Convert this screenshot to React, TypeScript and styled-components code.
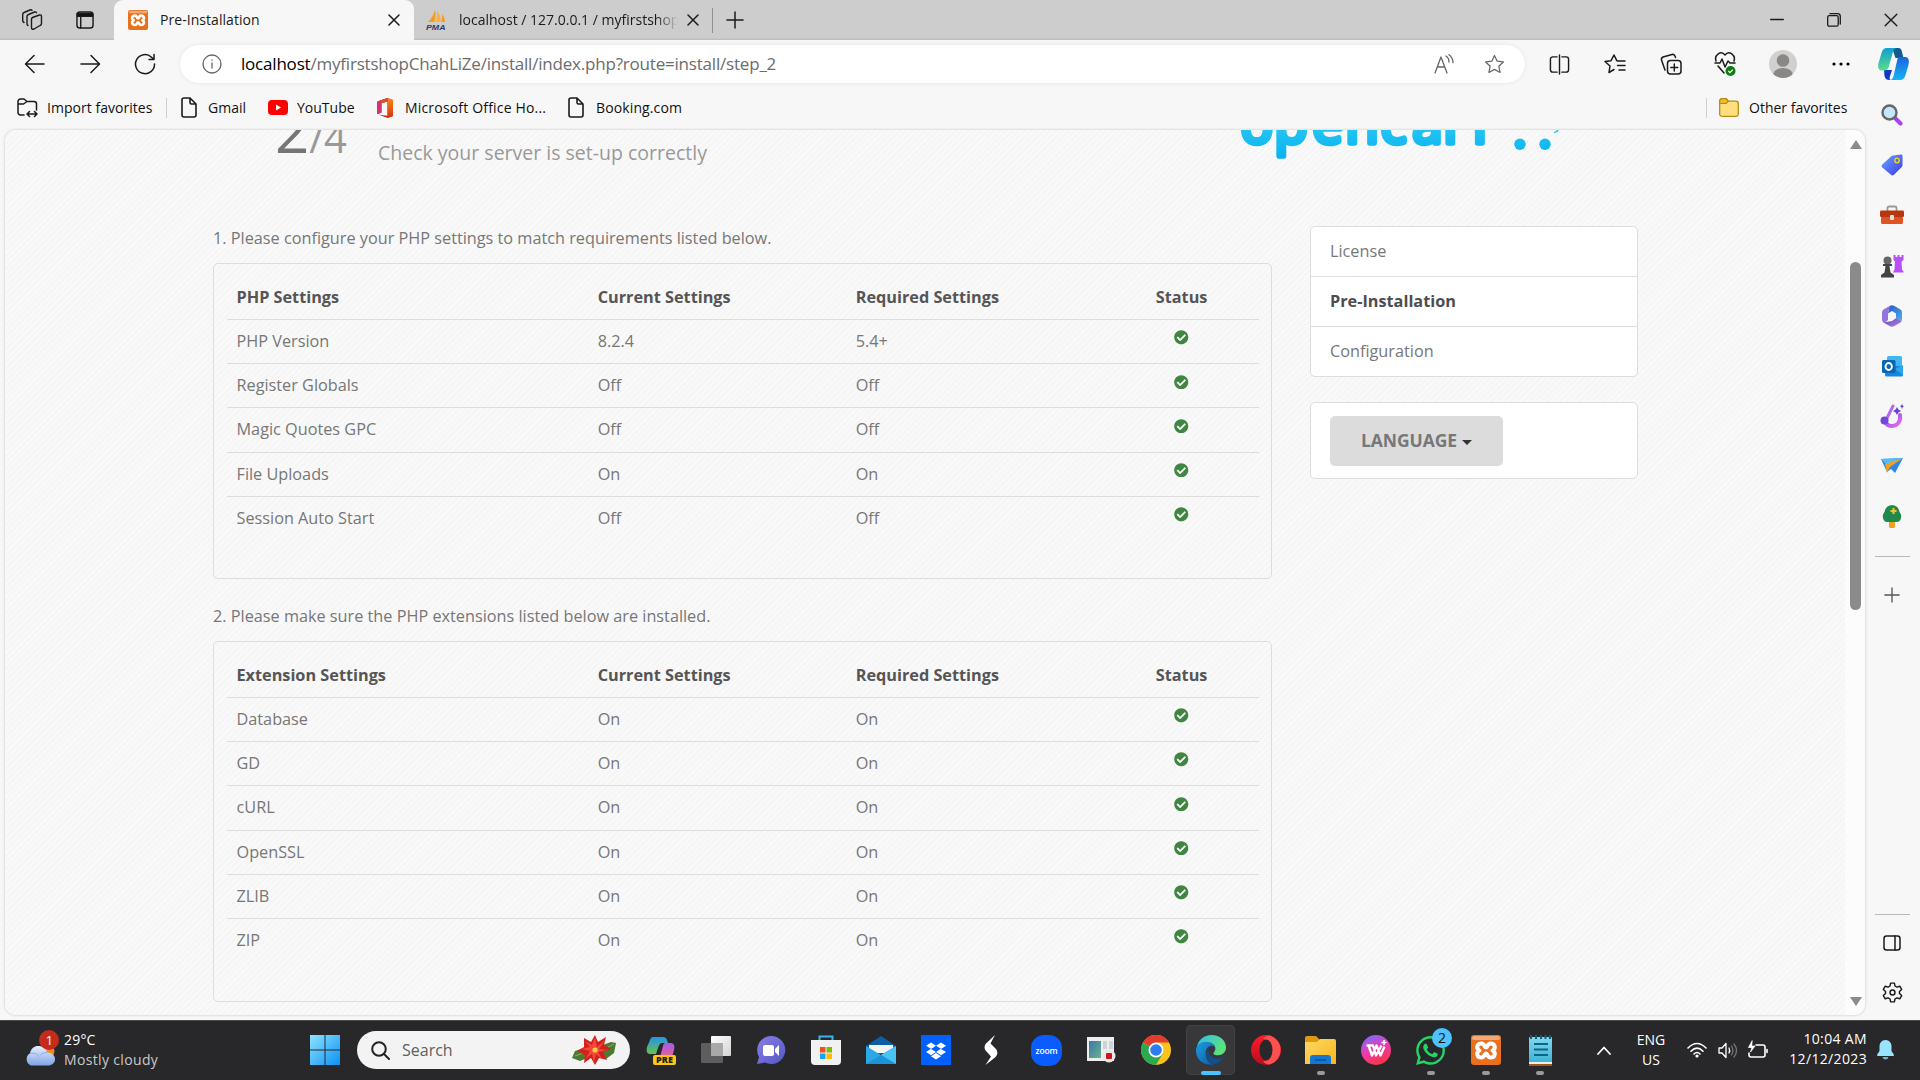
import React from "react";
import styled, { createGlobalStyle, css } from "styled-components";
import { FaCheckCircle, FaWhatsapp, FaDropbox } from "react-icons/fa";

const UI = `"Open Sans", "Noto Sans", "Liberation Sans", sans-serif`;

const GlobalStyle = createGlobalStyle`
  * { box-sizing: border-box; }
  body { margin: 0; background: #f7f7f7; font-family: ${UI}; overflow: hidden; }
  svg { display: block; flex: none; }
  p { margin: 0; }
`;

const Desktop = styled.div`
  width: 1920px;
  height: 1080px;
  display: flex;
  flex-direction: column;
  overflow: hidden;
  color: #111;
`;

/* ---------- tab strip ---------- */
const TabStrip = styled.header`
  height: 40px;
  flex: none;
  display: flex;
  background: #cdcdcd;
  box-shadow: inset 0 -2px 2px -1px #b9b9b9;
`;
const Slot = styled.div<{ $w: number }>`
  width: ${(p) => p.$w}px;
  flex: none;
  display: flex;
  align-items: center;
  justify-content: center;
`;
const ActiveTab = styled.div`
  width: 300px;
  margin-left: 8px;
  background: #f7f7f7;
  border-radius: 9px 9px 0 0;
  display: flex;
  align-items: center;
  padding: 0 14px 0 14px;
  z-index: 1;
`;
const IdleTab = styled.div`
  width: 298px;
  display: flex;
  align-items: center;
  padding: 0 13px 0 12px;
`;
const TabTitle = styled.span<{ $left: number; $fade?: boolean; $ls: number }>`
  flex: 1;
  margin-left: ${(p) => p.$left}px;
  font-size: 14px;
  letter-spacing: ${(p) => p.$ls}px;
  line-height: 20px;
  white-space: nowrap;
  overflow: hidden;
  color: #1b1b1b;
  ${(p) =>
    p.$fade &&
    css`
      margin-right: 9px;
      -webkit-mask-image: linear-gradient(90deg, #000 90%, transparent 100%);
    `}
`;
const VRule = styled.div<{ $h: number; $c?: string; $mr?: number }>`
  width: 1px;
  height: ${(p) => p.$h}px;
  margin-right: ${(p) => p.$mr || 0}px;
  align-self: center;
  background: ${(p) => p.$c || "#cfcfcf"};
`;
const Spacer = styled.div`
  flex: 1;
`;

/* ---------- toolbar ---------- */
const Toolbar = styled.div`
  height: 48px;
  flex: none;
  display: flex;
  align-items: center;
  padding-left: 7px;
`;
const AddressBar = styled.div`
  width: 1345px;
  height: 38px;
  margin: 0 7px 0 8px;
  border-radius: 19px;
  background: #fff;
  box-shadow: 0 0 4px rgba(0, 0, 0, 0.08);
  display: flex;
  align-items: center;
  padding: 0 6px 0 7px;
`;
const Url = styled.span`
  margin-left: 4px;
  font-size: 17px;
  letter-spacing: -0.2px;
  line-height: 24px;
  color: #6c6c6c;
  white-space: nowrap;
  b {
    font-weight: 400;
    color: #000;
  }
`;

/* ---------- favorites bar ---------- */
const FavoritesBar = styled.nav`
  height: 42px;
  flex: none;
  display: flex;
  align-items: center;
  padding: 0 0 3px 17px;
`;
const Favorite = styled.div<{ $w: number; $gap: number; $ls?: number }>`
  width: ${(p) => p.$w}px;
  flex: none;
  display: flex;
  align-items: center;
  gap: ${(p) => p.$gap}px;
  font-size: 14px;
  letter-spacing: ${(p) => p.$ls || 0}px;
  line-height: 20px;
  white-space: nowrap;
`;

/* ---------- page ---------- */
const Middle = styled.div`
  flex: 1;
  min-height: 0;
  display: flex;
  padding-left: 5px;
`;
const Viewport = styled.main`
  width: 1860px;
  height: 885px;
  flex: none;
  display: flex;
  overflow: hidden;
  border-radius: 11px;
  box-shadow: 0 0 3px rgba(0, 0, 0, 0.22);
`;
const Page = styled.div`
  flex: 1;
  overflow: hidden;
  color: #777;
  background: repeating-linear-gradient(
    135deg,
    #f6f6f6 0,
    #f6f6f6 2.4px,
    #fbfbfb 3.2px,
    #fbfbfb 3.7px,
    #f6f6f6 4.42px
  );
`;
const ScrollTrack = styled.div`
  width: 20px;
  background: #fcfcfc;
  display: flex;
  flex-direction: column;
  align-items: center;
  padding: 10px 0 9px 1px;
`;
const ScrollThumb = styled.div`
  width: 11px;
  height: 348px;
  margin: 113px 0 auto;
  border-radius: 6px;
  background: #8b8b8b;
`;
const ScrollArrow = styled.span<{ $down?: boolean }>`
  border: 6px solid transparent;
  ${(p) =>
    p.$down
      ? "border-top: 9px solid #8b8b8b; border-bottom: 0;"
      : "border-bottom: 9px solid #8b8b8b; border-top: 0;"}
`;
const PageHeader = styled.div`
  height: 96px;
  display: flex;
  padding-left: 270px;
`;
const Step = styled.div`
  width: 103px;
  margin-top: -30px;
  font-size: 60px;
  line-height: 60px;
  color: #757575;
  white-space: nowrap;
  small {
    font-size: 40px;
    color: #999;
  }
`;
const Lead = styled.p`
  margin-top: 9px;
  width: 852px;
  font-size: 19.5px;
  line-height: 28px;
  color: #999;
`;
const Logo = styled.div`
  margin-top: -20px;
`;
const Columns = styled.div`
  display: flex;
  gap: 38px;
  padding-left: 208px;
`;
const MainColumn = styled.div`
  width: 1059px;
  font-size: 16.25px;
`;
const Intro = styled.p<{ $top?: number }>`
  height: 24px;
  line-height: 24px;
  margin: ${(p) => p.$top || 0}px 0 13px;
`;
const Panel = styled.section`
  border: 1px solid #ddd;
  border-radius: 5px;
  padding: 11px 12px 38.5px 13px;
`;
const Row = styled.div<{ $head?: boolean }>`
  display: grid;
  grid-template-columns: 35% 25% 25% 15%;
  height: ${(p) => (p.$head ? 44 : 44.2)}px;
  align-items: center;
  ${(p) => p.$head && "font-weight: 700; color: #555;"}
  & + & {
    border-top: 1px solid #ddd;
    padding-bottom: 1px;
  }
`;
const Cell = styled.div<{ $status?: boolean }>`
  padding: 0 9.5px;
  line-height: 24px;
  ${(p) => p.$status && "display: flex; justify-content: center;"}
`;
const Passed = styled(FaCheckCircle)`
  color: #418542;
  font-size: 14.5px;
  margin-bottom: 7px;
`;
const SideColumn = styled.aside`
  width: 328px;
  font-size: 16.25px;
`;
const Card = styled.div`
  background: #fff;
  border: 1px solid #ddd;
  border-radius: 5px;
  margin-bottom: 25px;
`;
const StepLink = styled.div<{ $active?: boolean }>`
  height: 49px;
  padding: 0 19px 1px;
  display: flex;
  align-items: center;
  ${(p) => p.$active && "font-weight: 700; color: #4d4d4d;"}
  & + & {
    height: 50px;
    border-top: 1px solid #ddd;
  }
`;
const LanguageCard = styled(Card)`
  height: 77px;
  padding: 13px 19px;
`;
const LanguageButton = styled.button`
  width: 173px;
  height: 50px;
  border: 0;
  border-radius: 5px;
  background: #dcdcdc;
  color: #777;
  font: 700 17.5px ${UI};
  letter-spacing: -0.1px;
  padding: 0 0 2px;
  display: flex;
  align-items: center;
  justify-content: center;
  gap: 5px;
`;
const Caret = styled.span`
  border: 5px solid transparent;
  border-top-color: #333;
  border-bottom: 0;
  margin-top: 4px;
`;

/* ---------- edge sidebar ---------- */
const SideBar = styled.aside`
  flex: 1;
  display: flex;
  flex-direction: column;
  align-items: center;
  margin-top: -40px;
  padding-right: 1px;
  z-index: 1;
`;
const SideItem = styled.div<{ $h?: number }>`
  height: ${(p) => p.$h || 50.2}px;
  flex: none;
  display: flex;
  align-items: center;
  justify-content: center;
`;
const HRule = styled.div`
  width: 35px;
  height: 1px;
  background: #b9b9b9;
  flex: none;
`;

/* ---------- taskbar ---------- */
const Taskbar = styled.footer`
  height: 60px;
  flex: none;
  display: flex;
  align-items: center;
  padding-bottom: 1px;
  background: #28282b;
  border-top: 1px solid #4a4a4c;
  color: #fff;
  z-index: 2;
`;
const Weather = styled.div`
  width: 297px;
  padding: 0 0 1px 24px;
  display: flex;
  align-items: center;
  font-size: 14px;
  line-height: 20px;
  letter-spacing: 0.2px;
  gap: 4px;
  span {
    color: #c9c9c9;
    letter-spacing: 0.35px;
  }
`;
const StartSlot = styled(Slot)`
  margin-right: 5px;
`;
const SearchBox = styled.div`
  width: 273px;
  height: 38px;
  margin-right: 4px;
  border-radius: 19px;
  background: #f3f3f3;
  display: flex;
  align-items: center;
  padding: 0 14px;
  color: #5f5f5f;
  font-size: 16px;
  gap: 12px;
  letter-spacing: 0;
`;
const Program = styled.div<{ $active?: boolean; $running?: boolean }>`
  width: 49px;
  height: 50px;
  margin: 0 2.98px;
  flex: none;
  border-radius: 5px;
  display: flex;
  align-items: center;
  justify-content: center;
  position: relative;
  ${(p) => p.$active && "background: #38383b; box-shadow: inset 0 0 0 1px #434346;"}
  &::after {
    content: "";
    position: absolute;
    bottom: 0;
    height: 4px;
    border-radius: 2px;
    ${(p) =>
      p.$active
        ? "width: 20px; background: #4cc2ff;"
        : p.$running
          ? "width: 8px; background: #9a9a9a;"
          : ""}
  }
`;
const Count = styled.span`
  position: absolute;
  left: 26px;
  top: 3px;
  width: 20px;
  height: 20px;
  border-radius: 50%;
  background: #4cc2ff;
  color: #111;
  font-size: 14px;
  line-height: 20px;
  text-align: center;
`;
const Lang = styled.div`
  width: 58px;
  text-align: center;
  font-size: 14px;
  line-height: 20px;
`;
const Clock = styled.div`
  width: 93px;
  margin: -2px 10px 0 0;
  text-align: right;
  font-size: 14px;
  line-height: 20px;
  letter-spacing: 0.35px;
  white-space: nowrap;
`;

/* ---------- drawings ---------- */
type LineProps = { w?: number; h?: number; vb?: string; c?: string; sw?: number; children: React.ReactNode };
const Line = ({ w = 22, h = w, vb = "0 0 22 22", c = "#1b1b1b", sw = 1.5, children }: LineProps) => (
  <svg width={w} height={h} viewBox={vb} fill="none" stroke={c} strokeWidth={sw} strokeLinecap="round" strokeLinejoin="round">
    {children}
  </svg>
);
const CloseIcon = ({ s = 11, w = 1.5 }: { s?: number; w?: number }) => (
  <Line w={s} vb="0 0 12 12" sw={w}><path d="M1 1l10 10M11 1L1 11" /></Line>
);
const PlusIcon = ({ s = 18, c = "#1b1b1b" }: { s?: number; c?: string }) => (
  <Line w={s} vb="0 0 18 18" c={c}><path d="M9 1v16M1 9h16" /></Line>
);
const FileIcon = () => (
  <Line w={16} h={21} vb="0 0 16 21" sw={1.6}>
    <path d="M3 1h6l6 6v11a2 2 0 0 1-2 2H3a2 2 0 0 1-2-2V3a2 2 0 0 1 2-2zM9 1v4.500a1.500 1.500 0 0 0 1.500 1.500H15" />
  </Line>
);
const STAR = "M11 1.500l2.800 6 6.500.8-4.800 4.500 1.300 6.500L11 16.100l-5.800 3.200 1.300-6.500L1.700 8.300l6.500-.8z";
const Xampp = ({ s }: { s: number }) => (
  <svg width={s} height={s} viewBox="0 0 30 30">
    <rect width="30" height="30" rx="3" fill="#e9701c" />
    <rect x="1" y="1" width="28" height="4" rx="2" fill="#f3a878" />
    <path
      d="M10.500 8.500C5.500 8.500 5 14 8.500 15.500 5 17 5.500 22.500 10.500 22.500c3.500 0 2.500-4 4.500-4s1 4 4.500 4c5 0 5.500-5.500 2-7 3.500-1.500 3-7-2-7-3.500 0-2.500 4-4.500 4s-1-4-4.500-4z"
      fill="none"
      stroke="#fff"
      strokeWidth="4"
      strokeLinejoin="round"
    />
  </svg>
);
const Gradient = ({ id, a, b, x2 = "1", y2 = "1" }: { id: string; a: string; b: string; x2?: string; y2?: string }) => (
  <linearGradient id={id} x1="0" y1="0" x2={x2} y2={y2}>
    <stop stopColor={a} />
    <stop offset="1" stopColor={b} />
  </linearGradient>
);
const PmaIcon = () => (
  <svg width="20" height="20" viewBox="0 0 20 20">
    <path d="M9 0c1 4 1 8-1 12H2C6 8 8 4 9 0z" fill="#f59b1e" />
    <path d="M11 1c3 3 4 7 3.500 11H9C11 8 11.500 5 11 1z" fill="#fbb040" />
    <path d="M16 4c2 3 3 5 3 8h-4c1-2 1.300-5 1-8z" fill="#f59b1e" />
    <text x="0" y="19.700" fontSize="8" fontWeight="700" fontStyle="italic" fill="#33376b" textLength="19.500" lengthAdjust="spacingAndGlyphs" fontFamily="Liberation Sans">PMA</text>
  </svg>
);
const OpenCartLogo = () => (
  <svg width="340" height="60" viewBox="1230 110 340 60">
    <defs>
      <linearGradient id="oc" gradientUnits="userSpaceOnUse" x1="0" y1="125" x2="0" y2="160">
        <stop stopColor="#29c5f3" />
        <stop offset="1" stopColor="#04b2f1" />
      </linearGradient>
    </defs>
    <text
      x="1240.5 1274.500 1312.500 1345.500 1380.500 1412.500 1443.500 1465"
      y="143"
      fontSize="54"
      fontFamily="Open Sans"
      fill="url(#oc)"
      stroke="url(#oc)"
      strokeWidth="5.5"
      strokeLinejoin="round"
    >
      opencarT
    </text>
    <g fill="url(#oc)">
      <circle cx="1520" cy="144.300" r="5.700" />
      <circle cx="1545" cy="144.300" r="5.700" />
      <path d="M1554 132.500q4-3 6-6l-2 5-4 2z" />
    </g>
  </svg>
);
const CopilotIcon = () => (
  <svg width="31" height="32" viewBox="0 0 31 32">
    <defs>
      <Gradient id="cpA" a="#0a9ad8" b="#5bdc88" x2=".1" />
      <Gradient id="cpB" a="#1a63dd" b="#16b4f5" x2="0" />
    </defs>
    <path d="M14 0h6.500c2 0 3 1.500 3.500 4l1.500 6h-8z" fill="#155a8e" />
    <path d="M6 22h8l-2 6c-.7 2-.5 3.500.5 4-4 0-5-1-6-4z" fill="#1138c4" />
    <path d="M9 0h10c-2.500 0-3.500 2-4.200 4.500L11 18c-.8 3-2.300 4.500-5 4.500H4C0 22.500-.5 19 .7 14.500L3.500 5C4.500 1.500 6 0 9 0z" fill="url(#cpA)" />
    <path d="M21 9h6c4 0 4.500 4 3.300 8.500L27.500 27c-1 3.500-2.500 5-5.500 5H11.500c2.500 0 3.500-2 4.200-4.500L19 13c.6-2.500 1-4 2-4z" fill="url(#cpB)" />
  </svg>
);
const HealthIcon = () => (
  <svg width="24" height="26" viewBox="0 0 24 26" fill="none">
    <path d="M2 10C0 4 7-1 11 4c4-5 11 0 9 6M1 12h5l2-4 3 8 3-6 2 2h5M4 15l6 7" stroke="#1b1b1b" strokeWidth="1.500" strokeLinejoin="round" strokeLinecap="round" />
    <circle cx="16.500" cy="20" r="5" fill="#107c10" />
    <path d="M14.300 20l1.700 1.600 2.800-3" stroke="#fff" strokeWidth="1.200" />
  </svg>
);
const EdgeIcon = () => (
  <svg width="30" height="30" viewBox="0 0 31 31">
    <defs>
      <Gradient id="edA" a="#35b8f0" b="#5be37a" y2=".4" />
      <Gradient id="edB" a="#1b9de2" b="#0c59a4" y2="1" />
    </defs>
    <path d="M1 13C2 5 8 0 16 0c9 0 15 6 15 13 0 5-4 8-8 8-3 0-5-1-5-2 0-1 2-2 2-5 0-4-4-6-8-6C6 8 2 10 1 13z" fill="url(#edA)" />
    <path d="M0 16C0 10 5 7 10 7c6 0 10 3 10 7 0-2-2-3-4-3-3 0-6 3-6 8 0 6 4 11 9 11.500C10 32 0 27 0 16z" fill="url(#edB)" />
    <path d="M11 18c-1 7 4 12 9 12 4-1 7-4 9-7-3 2-6 2-9 1-5-1-7-4-7-9-1 1-2 2-2 3z" fill="#104f91" />
  </svg>
);
const ChromeIcon = () => (
  <svg width="30" height="30" viewBox="0 0 30 30">
    <circle cx="15" cy="15" r="15" fill="#fcc31e" />
    <path d="M15 15L2 7.500A15 15 0 0 1 28 7.500H15z" fill="#e33b2e" />
    <path d="M15 15L2 7.500A15 15 0 0 0 15 30l6.500-11z" fill="#2da94f" />
    <circle cx="15" cy="15" r="7.500" fill="#fff" />
    <circle cx="15" cy="15" r="5.800" fill="#2d7df0" />
  </svg>
);
const Poinsettia = () => (
  <svg width="44" height="30" viewBox="0 0 44 30">
    <path d="M16 12L3 16l-3 7 8 3 12-5zM28 11l11-4 5 1-2 10-8 6-8-5z" fill="#4b7a35" />
    <path d="M3 21l14-5M29 16l13-7" stroke="#8fae62" strokeWidth="1" />
    <path d="M12 3l7 4 4-7 3 7 8-5-2 8 7 4-8 3 4 8-8-2-4 7-4-7-7 5 1-8-8-4 7-4z" fill="#d3201c" />
    <path d="M23 2l2 10 8-7-6 9 9 1-10 2 4 7-6-5-2 9-2-9-6 4 4-7-8-2 8-2-5-6 7 4z" fill="#f2483c" />
    <circle cx="23" cy="15" r="2.600" fill="#f4cf3e" />
  </svg>
);
const WeatherIcon = () => (
  <svg width="36" height="40" viewBox="0 0 36 40">
    <defs><Gradient id="cl" a="#e8f0ff" b="#7fa4e6" x2="0" /></defs>
    <circle cx="23" cy="21" r="7.500" fill="#f08a1d" />
    <path d="M7 35.500a6.800 6.800 0 0 1-1-12.200C7 18 10.500 16 14 16c5 0 8 2.500 9 6.500 4 0 8 2.500 8 6.500s-3 6.500-7 6.500z" fill="url(#cl)" />
    <path d="M6 23.500c4-1 7 0 9 3M23 22.500c-3 0-5 1-6.500 2.500" stroke="#86a9e8" fill="none" />
    <circle cx="25" cy="10" r="10" fill="#c42b1c" />
    <text x="21.500" y="15" fontSize="13.500" fill="#fff" fontFamily="Open Sans">1</text>
  </svg>
);
const OfficeIcon = () => (
  <svg width="16" height="20" viewBox="0 0 16 20">
    <defs><Gradient id="of" a="#f58a1c" b="#d8300c" x2="0" /></defs>
    <path d="M10.500 0L16 2v16l-5.500 2L2 16.700l8.500 1V3.500L4.500 5v9.500L1 16c-.7.300-1 0-1-.7V5c0-1 .3-1.500 1-1.800z" fill="#c8241c" />
    <path d="M10.500 0L16 2v16l-5.500 2z" fill="url(#of)" />
    <path d="M10.500 0L1 3.200C.3 3.500 0 4 0 5v10.300c0 .7.300 1 1 .7l3.500-1.500V5l6-1.500z" fill="#d6336c" />
    <path d="M10.500 0L4 2.200v3L10.500 3.500z" fill="#e0531f" />
  </svg>
);

/* taskbar programs */
const programs: { name: string; icon: React.ReactNode; active?: boolean; running?: boolean; count?: number }[] = [
  {
    name: "copilot",
    icon: (
      <svg width="30" height="30" viewBox="0 0 30 30">
        <defs><Gradient id="pa" a="#2394ea" b="#6cc04a" x2="0" /><Gradient id="pb" a="#a05bf0" b="#f0628a" x2="0" /></defs>
        <path d="M7 2h10c3 0 4 2 5 6h-6c-2 0-3 2-4 5l-2 6H4c-3 0-4-3-3-7l3-7c.5-2 1.500-3 3-3z" fill="url(#pa)" />
        <path d="M19 8h6c3 0 4 3 3 7l-2 7H14l3-11c.5-2 1-3 2-3z" fill="url(#pb)" />
        <rect x="7" y="20" width="23" height="10" rx="2" fill="#ffc715" />
        <text x="10" y="28.300" fontSize="9" fontWeight="800" fill="#222" textLength="17" fontFamily="Open Sans">PRE</text>
      </svg>
    ),
  },
  {
    name: "task view",
    icon: (
      <svg width="30" height="30" viewBox="0 0 30 30">
        <defs><Gradient id="tv" a="#fff" b="#d4d4d4" /></defs>
        <rect x="10" y="1" width="20" height="20" rx="1" fill="url(#tv)" />
        <rect x="0" y="8" width="22" height="20" rx="1" fill="#6b6b6b" opacity=".8" />
        <rect x="10" y="8" width="12" height="13" fill="#a9a9a9" />
      </svg>
    ),
  },
  {
    name: "chat",
    icon: (
      <svg width="30" height="30" viewBox="0 0 30 30">
        <defs><Gradient id="ch" a="#8d7ee8" b="#5257c4" /></defs>
        <path d="M15 1a14 14 0 1 1-6 26.500L1 29l2-7A14 14 0 0 1 15 1z" fill="url(#ch)" />
        <rect x="7" y="10" width="11" height="11" rx="2" fill="#fff" />
        <path d="M19 14l4-4v11l-4-4z" fill="#fff" />
      </svg>
    ),
  },
  {
    name: "store",
    icon: (
      <svg width="30" height="30" viewBox="0 0 30 30">
        <path d="M8.500 6V1.500h13V6" fill="none" stroke="#35b6e6" strokeWidth="2" />
        <path d="M0 5h30v21a4 4 0 0 1-4 4H4a4 4 0 0 1-4-4z" fill="#f1f1f1" />
        <path d="M9 12h5.500v5.500H9z" fill="#f04e23" /><path d="M15.500 12H21v5.500h-5.500z" fill="#7fba00" />
        <path d="M9 18.500h5.500V24H9z" fill="#19a2ef" /><path d="M15.500 18.500H21V24h-5.500z" fill="#ffb900" />
      </svg>
    ),
  },
  {
    name: "mail",
    icon: (
      <svg width="30" height="28" viewBox="0 0 30 28">
        <path d="M0 10L15 0l15 10v8H0z" fill="#0d5ea8" />
        <path d="M3 9h24v8H3z" fill="#f3f3f3" />
        <path d="M0 10l15 9 15-9v18H0z" fill="#2ba9e6" />
        <path d="M30 10v18L15 19z" fill="#48c4f2" /><path d="M0 28l15-9 15 9z" fill="#1c94dc" />
      </svg>
    ),
  },
  {
    name: "dropbox",
    icon: (
      <svg width="30" height="30" viewBox="0 0 30 30">
        <rect width="30" height="30" fill="#0061ff" />
        <g transform="translate(5 6)"><FaDropbox size={20} color="#fff" /></g>
      </svg>
    ),
  },
  {
    name: "s-pen",
    icon: (
      <svg width="14" height="30" viewBox="0 0 14 30">
        <path d="M11 0L2.500 8C0 11 0 13 2 16l5 5.500L1.500 30l9.500-7.500c3-3 3-5.500 1-8.500L6.500 8.500z" fill="#fff" />
      </svg>
    ),
  },
  {
    name: "zoom",
    icon: (
      <svg width="31" height="31" viewBox="0 0 31 31">
        <rect width="31" height="31" rx="13" fill="#0b5cff" />
        <text x="4.500" y="18.500" fontSize="8.500" fontWeight="600" fill="#fff" textLength="22" fontFamily="Open Sans">zoom</text>
      </svg>
    ),
  },
  {
    name: "recorder",
    icon: (
      <svg width="30" height="28" viewBox="0 0 30 28">
        <defs><Gradient id="rc" a="#3a78a6" b="#6cb190" /></defs>
        <rect x="1" y="1" width="27" height="24" fill="#eee" />
        <rect x="3" y="5" width="12" height="17" fill="url(#rc)" />
        <path d="M17 5h4v8h-4zM23 5h4v8h-4z" fill="#cdd3d8" />
        <circle cx="23" cy="20" r="6.500" fill="#e8e8e8" /><rect x="20" y="17" width="6" height="6" rx="1" fill="#d01616" />
      </svg>
    ),
  },
  { name: "chrome", icon: <ChromeIcon /> },
  { name: "edge", icon: <EdgeIcon />, active: true },
  {
    name: "opera",
    icon: (
      <svg width="30" height="30" viewBox="0 0 30 30">
        <defs><Gradient id="op" a="#ff1b2d" b="#b80d1c" x2="0" /></defs>
        <circle cx="15" cy="15" r="15" fill="url(#op)" />
        <path d="M20 1a15 15 0 0 1 0 28c-3 1-6 0-8-3 9 2 10-22 0-22 2-3 5-4 8-3z" fill="#ff5050" />
        <ellipse cx="15" cy="15" rx="6.500" ry="10.500" fill="#28282b" />
      </svg>
    ),
  },
  {
    name: "explorer",
    running: true,
    icon: (
      <svg width="31" height="28" viewBox="0 0 31 28">
        <defs><Gradient id="ex" a="#ffd965" b="#f8b51b" /></defs>
        <path d="M0 2a2 2 0 0 1 2-2h9l4 4v8H0z" fill="#dd9a10" />
        <path d="M0 6h12l3-3h14a2 2 0 0 1 2 2v23H0z" fill="url(#ex)" />
        <path d="M5 28v-6a3 3 0 0 1 3-3h15a3 3 0 0 1 3 3v6z" fill="#1477d1" /><path d="M10 24h11" stroke="#0b4f95" strokeWidth="1.500" />
      </svg>
    ),
  },
  {
    name: "wps",
    icon: (
      <svg width="30" height="30" viewBox="0 0 30 30">
        <defs><linearGradient id="wp" x1=".2" y1="0" x2=".6" y2="1"><stop stopColor="#7a6bff" /><stop offset=".5" stopColor="#e83cb0" /><stop offset="1" stopColor="#ff3340" /></linearGradient></defs>
        <circle cx="15" cy="15" r="15" fill="url(#wp)" />
        <path d="M5.500 10.500H12l3 10 5.500-10M7.500 10.500l3.500 10 4.500-10 4 10 4-9" fill="none" stroke="#fff" strokeWidth="2.300" strokeLinejoin="round" />
        <path d="M23 5v5M20.500 7.500h5" stroke="#fff" strokeWidth="1.500" />
      </svg>
    ),
  },
  { name: "whatsapp", icon: <FaWhatsapp size={33} color="#25d366" />, running: true, count: 2 },
  { name: "xampp", icon: <Xampp s={30} />, running: true },
  {
    name: "notepad",
    running: true,
    icon: (
      <svg width="23" height="31" viewBox="0 0 23 31">
        <defs><Gradient id="np" a="#7fd8ee" b="#3db3d4" x2="0" /></defs>
        <rect y="2" width="23" height="26" rx="1" fill="url(#np)" />
        <path d="M0 27h23v2H0z" fill="#eee" /><path d="M0 29h23v2H0z" fill="#a2561a" />
        <path d="M2 0v4M7 0v4M12 0v4M16.500 0v4M21 0v4" stroke="#0a5f80" strokeWidth="2" />
        <path d="M5 9h14M5 14.500h14M5 20h14" stroke="#0d6487" strokeWidth="2" />
      </svg>
    ),
  },
];

const sidebarIcons: React.ReactNode[] = [
  <svg key="search" width="22" height="22" viewBox="0 0 22 22">
    <path d="M13 13l6.500 6.500" stroke="#b13cf0" strokeWidth="4" strokeLinecap="round" />
    <circle cx="8.500" cy="8.500" r="7" fill="#c5e5fa" stroke="#666" strokeWidth="2.400" />
  </svg>,
  <svg key="tag" width="22" height="22" viewBox="0 0 22 22">
    <defs><Gradient id="tg" a="#67a5ff" b="#3b3be8" /></defs>
    <path d="M12 1.500l8-1c1 0 1.500.5 1.500 1.500v9c0 1-.3 1.500-1 2.200L13 20.700c-1 1-2 1-3 0L1.300 13.500c-1-1-1-2 0-3L10 2.500c.5-.5 1-.9 2-1z" fill="url(#tg)" />
    <circle cx="16" cy="6.500" r="2.200" fill="#3d6fe0" stroke="#f0c934" strokeWidth="1.500" />
  </svg>,
  <svg key="tools" width="24" height="20" viewBox="0 0 24 20">
    <path d="M7.500 6V3a1.500 1.500 0 0 1 1.500-1.500h6A1.500 1.500 0 0 1 16.500 3v3" fill="none" stroke="#999" strokeWidth="1.800" />
    <rect x="1" y="11" width="22" height="8" rx="1.500" fill="#dd5425" /><rect x="0" y="5.500" width="24" height="6.500" rx="1.200" fill="#b5370f" />
    <rect x="10" y="10" width="4" height="5" rx="1" fill="#ddd" />
  </svg>,
  <svg key="games" width="24" height="24" viewBox="0 0 24 24">
    <path d="M13.500 1h2v2h2V1h2v2h2V1h2v5l-2 1.500.5 8 1.500 2v1H13l1.500-3 .5-8-1.500-1.500z" fill="#b850f5" />
    <circle cx="7.500" cy="6.500" r="4" fill="#666" /><path d="M3 10h9v2H9.500l1 6.500L14 21v2.500H1V21l3.500-2.500 1-6.500H3z" fill="#444" />
  </svg>,
  <svg key="m365" width="22" height="24" viewBox="0 0 22 24">
    <defs><Gradient id="m1" a="#2f55c8" b="#49b3ee" /><Gradient id="m2" a="#5a3fb0" b="#b58ae8" /></defs>
    <path d="M8.500 2Q11 .5 13.500 2l6 3.500Q21 6.500 21 8.500v7q0 1-.5 1.500L15 14V9.500L11 7 7 9.500z" fill="url(#m1)" />
    <path d="M9 1.700L2.500 5.500Q1 6.500 1 8.500v7q0 2 1.500 3l1 .5L7 16V8.500z" fill="#9474dc" />
    <path d="M2.500 18.500l8.500-1.500 4-3 5.500 3q-.3 1-1 1.500l-6 3.500q-2.500 1.500-5 0z" fill="url(#m2)" />
    <path d="M11 8l4 2v4l-4 2.500L7 14v-4z" fill="#f7f7f7" />
  </svg>,
  <svg key="outlook" width="23" height="22" viewBox="0 0 23 22">
    <rect x="6" y="1" width="15" height="14" rx="1.500" fill="#43b6f0" /><path d="M4 11h18v9a1.500 1.500 0 0 1-1.500 1.500h-15A1.500 1.500 0 0 1 4 20z" fill="#1787d9" />
    <path d="M22 10v10L14 14z" fill="#28a8ea" />
    <rect x="1" y="5" width="13.500" height="13" rx="1.500" fill="#0766b8" /><ellipse cx="7.700" cy="11.500" rx="3.200" ry="3.500" fill="none" stroke="#fff" strokeWidth="1.900" />
  </svg>,
  <svg key="designer" width="24" height="24" viewBox="0 0 24 24">
    <defs><Gradient id="ds" a="#8c55e8" b="#e66af0" /></defs>
    <path d="M20 11c1 7-3 11-8 11-4 0-6-2-7-5" fill="none" stroke="url(#ds)" strokeWidth="4" strokeLinecap="round" />
    <path d="M13 2L6 16" stroke="#b06bea" strokeWidth="3" strokeLinecap="round" /><circle cx="4.500" cy="16.500" r="4" fill="#7049d8" />
    <path d="M17 3l1.400 2.600L21 7l-2.600 1.400L17 11l-1.400-2.600L13 7l2.600-1.400zM22 0l.8 1.500 1.200.8-1.200.8L22 5l-.8-1.900-1.200-.8 1.200-.8z" fill="#6a43d6" />
  </svg>,
  <svg key="drop" width="24" height="18" viewBox="0 0 24 18">
    <path d="M1 2l22-1-8 15-4-4-4 3z" fill="#2d87ea" /><path d="M1 2l22-1L7 8z" fill="#54bdf5" /><path d="M23 1L5 7l2 9 3-6z" fill="#f0a020" />
  </svg>,
  <svg key="tree" width="20" height="24" viewBox="0 0 20 24">
    <rect x="7" y="15" width="6" height="8" rx="1.500" fill="#f0a01c" /><path d="M10 0c4.500 0 7 3.500 7.500 7 1.500 1.500 2 3.500 1.500 6-.5 2.500-2 4-4 4H5c-2 0-3.500-1.500-4-4-.5-2.500 0-4.500 1.500-6C3 3.500 5.500 0 10 0z" fill="#1f8a4c" />
    <path d="M11.500 3v6M8.500 6h6" stroke="#f5c02e" strokeWidth="2.200" />
  </svg>,
];

type Check = [string, string, string];
const phpSettings: Check[] = [
  ["PHP Version", "8.2.4", "5.4+"],
  ["Register Globals", "Off", "Off"],
  ["Magic Quotes GPC", "Off", "Off"],
  ["File Uploads", "On", "On"],
  ["Session Auto Start", "Off", "Off"],
];
const extensions: Check[] = ["Database", "GD", "cURL", "OpenSSL", "ZLIB", "ZIP"].map((n): Check => [n, "On", "On"]);

const Requirements = ({ title, rows }: { title: string; rows: Check[] }) => (
  <Panel>
    <Row $head>
      <Cell>{title}</Cell>
      <Cell>Current Settings</Cell>
      <Cell>Required Settings</Cell>
      <Cell $status>Status</Cell>
    </Row>
    {rows.map(([name, current, required]) => (
      <Row key={name}>
        <Cell>{name}</Cell>
        <Cell>{current}</Cell>
        <Cell>{required}</Cell>
        <Cell $status><Passed /></Cell>
      </Row>
    ))}
  </Panel>
);

export default function App() {
  return (
    <Desktop>
      <GlobalStyle />
      <TabStrip>
        <Slot $w={64}>
          <Line w={22} sw={1.4}>
            <path d="M11.500 8.500l7-2.500q2-.5 2 1.500v7q0 1.500-1.500 2l-6 3.500q-2.500 1-2.500-1.500v-8q0-1.500 1-2zM7 16.500q-1-.5-1-1.500V7.500Q6 6 7.500 5.500l6-2.500q1.500-.5 2 .7M3 13.500q-1.300-.5-1.300-2V5.500Q1.700 4 3 3.500l6-2.500q1.500-.5 2 .3" />
          </Line>
        </Slot>
        <Slot $w={42}>
          <Line w={18} vb="0 0 19 19">
            <rect x="1" y="1" width="17" height="17" rx="3" /><path d="M1.500 2.500h16v3h-16z" fill="#111" /><path d="M5 6v12" />
          </Line>
        </Slot>
        <ActiveTab>
          <Xampp s={20} />
          <TabTitle $left={12} $ls={0.05}>Pre-Installation</TabTitle>
          <CloseIcon s={12} />
        </ActiveTab>
        <IdleTab>
          <PmaIcon />
          <TabTitle $left={13} $ls={0} $fade>localhost / 127.0.0.1 / myfirstshop</TabTitle>
          <CloseIcon s={12} />
        </IdleTab>
        <VRule $h={25} $c="#8f8f8f" />
        <Slot $w={43}><PlusIcon /></Slot>
        <Spacer />
        <Slot $w={57}><Line w={14} vb="0 0 14 14" sw={1.4}><path d="M.7 6.500h12.600" /></Line></Slot>
        <Slot $w={57}>
          <Line w={14} vb="0 0 14 14" sw={1.3}>
            <rect x=".7" y="2.700" width="10.500" height="10.500" rx="1.500" /><path d="M3 .7h7.500a2.800 2.800 0 0 1 2.800 2.800V11" />
          </Line>
        </Slot>
        <Slot $w={58}><CloseIcon s={14} w={1.2} /></Slot>
      </TabStrip>

      <Toolbar>
        <Slot $w={55}><Line><path d="M20 11H2M10 2.500L1.500 11l8.500 8.500" /></Line></Slot>
        <Slot $w={55}><Line><path d="M2 11h18M12 2.500l8.500 8.500-8.500 8.500" /></Line></Slot>
        <Slot $w={55}><Line><path d="M20.500 11a9.500 9.500 0 1 1-3-6.800L20 6.500M20 1.500v5h-5" /></Line></Slot>
        <AddressBar>
          <Slot $w={50}>
            <Line w={20} vb="0 0 20 20" c="#666" sw={1.3}><circle cx="10" cy="10" r="9" /><path d="M10 9v5M10 6v.2" /></Line>
          </Slot>
          <Url><b>localhost</b>/myfirstshopChahLiZe/install/index.php?route=install/step_2</Url>
          <Spacer />
          <Slot $w={50}>
            <Line w={20} vb="0 0 20 20" c="#666" sw={1.3}><path d="M1 19L7 3l6 16M3.300 13h7.400M12 2q3 2 3 6M15 .7q4 3 4 8" /></Line>
          </Slot>
          <Slot $w={50}><Line w={21} c="#666" sw={1.3}><path d={STAR} /></Line></Slot>
        </AddressBar>
        <Slot $w={55}>
          <Line w={21}><path d="M8.500 3H4a2.500 2.500 0 0 0-2.500 2.500v11A2.500 2.500 0 0 0 4 19h4.500M13.500 3H18a2.500 2.500 0 0 1 2.500 2.500v11A2.500 2.500 0 0 1 18 19h-4.500M11 1v20" /></Line>
        </Slot>
        <Slot $w={56}>
          <Line w={22}><path d="M10 16.500l-5 3 1-6.500-5-4.500 6-.8L10 2l2.800 5.700L14 8M14.500 8H21M13.500 12.500H21M15 17h6" /></Line>
        </Slot>
        <Slot $w={55}>
          <Line w={22}>
            <rect x="7.500" y="7.500" width="13.500" height="13.500" rx="3" /><path d="M14.300 11v7M10.800 14.500h7M5 17L1.500 7q-.5-2 1.500-3l9-2.500q2-.5 2.700 1l.8 2" />
          </Line>
        </Slot>
        <Slot $w={55}><HealthIcon /></Slot>
        <Slot $w={60}>
          <svg width="28" height="28" viewBox="0 0 28 28">
            <clipPath id="av"><circle cx="14" cy="14" r="14" /></clipPath>
            <circle cx="14" cy="14" r="14" fill="#d2d0ce" />
            <g clipPath="url(#av)" fill="#8a8886"><circle cx="14" cy="10.500" r="6.300" /><ellipse cx="14" cy="25" rx="10" ry="7" /></g>
          </svg>
        </Slot>
        <Slot $w={55}>
          <svg width="18" height="4"><circle cx="2" cy="2" r="1.600" /><circle cx="9" cy="2" r="1.600" /><circle cx="16" cy="2" r="1.600" /></svg>
        </Slot>
        <Slot $w={51}><CopilotIcon /></Slot>
      </Toolbar>

      <FavoritesBar>
        <Favorite $w={149} $gap={9} $ls={0.03}>
          <Line w={21} h={20} vb="0 0 21 20">
            <path d="M7 17H3.500A2.500 2.500 0 0 1 1 14.500v-11A2.500 2.500 0 0 1 3.500 1H7l3 2.500h7A2.500 2.500 0 0 1 19.500 6v6M1 6h5.500L10 3.500M10.500 16h9M12.500 13.500L10 16l2.500 2.500M17.500 13.500L20 16l-2.500 2.500" />
          </Line>
          Import favorites
        </Favorite>
        <VRule $h={20} $mr={14} />
        <Favorite $w={87} $gap={11}><FileIcon />Gmail</Favorite>
        <Favorite $w={109} $gap={9}>
          <svg width="20" height="15" viewBox="0 0 20 15"><rect width="20" height="15" rx="4" fill="#f00" /><path d="M8 4.500l5 3-5 3z" fill="#fff" /></svg>
          YouTube
        </Favorite>
        <Favorite $w={191} $gap={12} $ls={0.18}><OfficeIcon />Microsoft Office Ho...</Favorite>
        <Favorite $w={130} $gap={12} $ls={0.12}><FileIcon />Booking.com</Favorite>
        <Spacer />
        <VRule $h={20} $mr={12} />
        <Favorite $w={201} $gap={10}>
          <svg width="20" height="19" viewBox="0 0 20 19">
            <path d="M.7 3A2.300 2.300 0 0 1 3 .7h4l2.500 2.500H17A2.300 2.300 0 0 1 19.300 5.500V16a2.300 2.300 0 0 1-2.300 2.300H3A2.300 2.300 0 0 1 .7 16z" fill="#ffe07f" stroke="#b58a17" strokeWidth="1.300" />
            <path d="M.7 5.500V3A2.300 2.300 0 0 1 3 .7h4l2.300 2.500L7 5.500z" fill="#eebc28" stroke="#b58a17" strokeWidth="1.200" />
          </svg>
          Other favorites
        </Favorite>
      </FavoritesBar>

      <Middle>
        <Viewport>
          <Page>
            <PageHeader>
              <Step>2<small>/4</small></Step>
              <Lead>Check your server is set-up correctly</Lead>
              <Logo><OpenCartLogo /></Logo>
            </PageHeader>
            <Columns>
              <MainColumn>
                <Intro>1. Please configure your PHP settings to match requirements listed below.</Intro>
                <Requirements title="PHP Settings" rows={phpSettings} />
                <Intro $top={24.5}>2. Please make sure the PHP extensions listed below are installed.</Intro>
                <Requirements title="Extension Settings" rows={extensions} />
              </MainColumn>
              <SideColumn>
                <Card>
                  <StepLink>License</StepLink>
                  <StepLink $active>Pre-Installation</StepLink>
                  <StepLink>Configuration</StepLink>
                </Card>
                <LanguageCard>
                  <LanguageButton>LANGUAGE<Caret /></LanguageButton>
                </LanguageCard>
              </SideColumn>
            </Columns>
          </Page>
          <ScrollTrack>
            <ScrollArrow />
            <ScrollThumb />
            <ScrollArrow $down />
          </ScrollTrack>
        </Viewport>
        <SideBar>
          {sidebarIcons.map((icon, i) => <SideItem key={i}>{icon}</SideItem>)}
          <SideItem $h={14} />
          <HRule />
          <SideItem $h={77}><PlusIcon s={16} c="#555" /></SideItem>
          <Spacer />
          <HRule />
          <SideItem $h={56}>
            <Line w={18} h={16} vb="0 0 18 16"><rect x="1" y="1" width="16" height="14" rx="2.500" /><path d="M12 1v14" /></Line>
          </SideItem>
          <SideItem $h={43}>
            <Line w={21}>
              <path d="M9 1.200h4l.6 3 2 1.200 3-1 2 3.400L18.300 10v2l2.300 2.200-2 3.400-3-1-2 1.200-.6 3H9l-.6-3-2-1.200-3 1-2-3.400L3.700 12v-2L1.400 7.800l2-3.400 3 1 2-1.200z" />
              <circle cx="11" cy="11" r="2.600" />
            </Line>
          </SideItem>
          <SideItem $h={6} />
        </SideBar>
      </Middle>

      <Taskbar>
        <Weather>
          <WeatherIcon />
          <div>29°C<br /><span>Mostly cloudy</span></div>
        </Weather>
        <StartSlot $w={55}>
          <svg width="30" height="30" viewBox="0 0 30 30">
            <defs><linearGradient id="st" gradientUnits="userSpaceOnUse" x1="0" y1="0" x2="30" y2="30"><stop stopColor="#8fe4ff" /><stop offset="1" stopColor="#0a90f5" /></linearGradient></defs>
            <path d="M0 0h14.500v14.500H0zM15.500 0H30v14.500H15.500zM0 15.500h14.500V30H0zM15.500 15.500H30V30H15.500z" fill="url(#st)" />
          </svg>
        </StartSlot>
        <SearchBox>
          <Line w={19} vb="0 0 19 19" c="#222" sw={2}><circle cx="8" cy="8" r="6.800" /><path d="M13 13l5 5" /></Line>
          Search
          <Spacer />
          <Poinsettia />
        </SearchBox>
        {programs.map((p) => (
          <Program key={p.name} $active={p.active} $running={p.running}>
            {p.icon}
            {p.count && <Count>{p.count}</Count>}
          </Program>
        ))}
        <Spacer />
        <Slot $w={36}><Line w={14} h={9} vb="0 0 14 9" c="#fff" sw={1.8}><path d="M1 8l6-6.500L13 8" /></Line></Slot>
        <Lang>ENG<br />US</Lang>
        <Slot $w={34}>
          <Line w={20} h={16} vb="0 0 20 16" c="#fff" sw={1.6}>
            <path d="M1 6q9-9 18 0M4 9.200q6-6 12 0M7 12q3-3 6 0" /><circle cx="10" cy="14" r=".8" fill="#fff" />
          </Line>
        </Slot>
        <Slot $w={27}>
          <Line w={20} h={17} vb="0 0 20 17" c="#fff" sw={1.3}>
            <path d="M1 6h3l4-4.500v14L4 11H1z" /><path d="M11 6q1.500 2.500 0 5" /><path d="M13.500 4q3 4.500 0 9M16 2q5 6.500 0 13" stroke="#777" />
          </Line>
        </Slot>
        <Slot $w={33}>
          <Line w={21} h={20} vb="0 0 21 20" c="#fff" sw={1.6}>
            <path d="M9 5h7a2 2 0 0 1 2 2v8a2 2 0 0 1-2 2H4a2 2 0 0 1-2-2v-2M20 9.500v3" />
            <path d="M5 1L1.500 7.500H5L3.500 12 8 6H5z" fill="#fff" strokeWidth=".8" />
          </Line>
        </Slot>
        <Clock>10:04 AM<br />12/12/2023</Clock>
        <svg width="17" height="20" viewBox="0 0 17 20">
          <path d="M8.500 0c4 0 6 3 6 6.500V11l2.300 3.500c.3.700 0 1.500-.8 1.500H1c-.8 0-1.100-.8-.8-1.500L2.500 11V6.500C2.500 3 4.500 0 8.500 0z" fill="#98e4ff" />
          <path d="M5.500 17h6q-.5 2.500-3 2.500t-3-2.500z" fill="#5fb8dc" />
        </svg>
        <Slot $w={26} />
      </Taskbar>
    </Desktop>
  );
}
